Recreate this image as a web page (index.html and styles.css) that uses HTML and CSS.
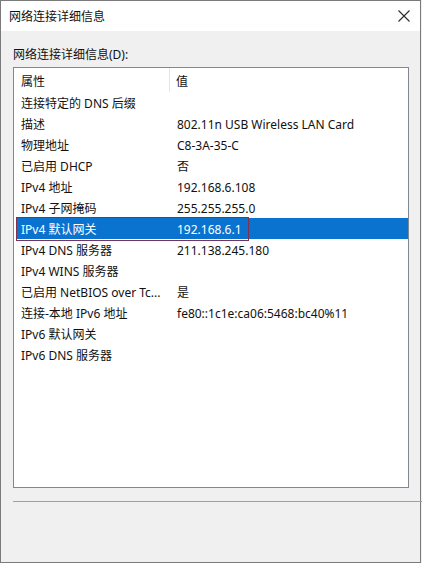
FILE: index.html
```html
<!DOCTYPE html>
<html lang="zh-CN">
<head>
<meta charset="utf-8">
<title>网络连接详细信息</title>
<link rel="stylesheet" href="styles.css">
</head>
<body>
<div class="window">
  <div class="titlebar">
    <span class="title">网络连接详细信息</span>
    <svg class="close" width="14" height="14" viewBox="0 0 14 14"><path d="M1.5 1.5 L12.5 12.5 M12.5 1.5 L1.5 12.5" stroke="#2b2b2b" stroke-width="1.1" fill="none"/></svg>
  </div>
  <div class="body">
    <div class="label">网络连接详细信息(D):</div>
    <div class="listbox">
      <div class="header">
        <div class="hcell c1">属性</div>
        <div class="hcell c2">值</div>
      </div>
      <div class="rows">
        <div class="row"><span class="c1">连接特定的 DNS 后缀</span><span class="c2"></span></div>
        <div class="row"><span class="c1">描述</span><span class="c2">802.11n USB Wireless LAN Card</span></div>
        <div class="row"><span class="c1">物理地址</span><span class="c2">C8-3A-35-C</span></div>
        <div class="row"><span class="c1">已启用 DHCP</span><span class="c2">否</span></div>
        <div class="row"><span class="c1">IPv4 地址</span><span class="c2">192.168.6.108</span></div>
        <div class="row"><span class="c1">IPv4 子网掩码</span><span class="c2">255.255.255.0</span></div>
        <div class="row selected"><span class="c1">IPv4 默认网关</span><span class="c2">192.168.6.1</span><span class="focus"></span></div>
        <div class="row"><span class="c1">IPv4 DNS 服务器</span><span class="c2">211.138.245.180</span></div>
        <div class="row"><span class="c1">IPv4 WINS 服务器</span><span class="c2"></span></div>
        <div class="row"><span class="c1">已启用 NetBIOS over Tc...</span><span class="c2">是</span></div>
        <div class="row"><span class="c1">连接-本地 IPv6 地址</span><span class="c2">fe80::1c1e:ca06:5468:bc40%11</span></div>
        <div class="row"><span class="c1">IPv6 默认网关</span><span class="c2"></span></div>
        <div class="row"><span class="c1">IPv6 DNS 服务器</span><span class="c2"></span></div>
      </div>
    </div>
    <div class="separator"></div>
  </div>
</div>
</body>
</html>
```
FILE: styles.css
```css
* { box-sizing: border-box; }
html, body { margin: 0; padding: 0; }
body {
  width: 422px;
  height: 563px;
  overflow: hidden;
  background: #f0f0f0;
  font-family: "Noto Sans", "Noto Sans CJK SC", sans-serif;
  font-size: 12px;
  color: #111;
}
.window {
  width: 421px;
  height: 563px;
  border: 1px solid #7a7a7a;
  display: flex;
  flex-direction: column;
  background: #f0f0f0;
}
.titlebar {
  height: 30px;
  background: #fff;
  display: flex;
  align-items: center;
  justify-content: space-between;
  padding: 0 9px 0 8px;
  flex: none;
}
.title { font-size: 12px; color: #111; }
.close { display: block; margin-top: -1px; }
.body {
  flex: 1;
  padding: 14px 0 0 12px;
  display: flex;
  flex-direction: column;
}
.label {
  height: 18px;
  padding-top: 2px;
  line-height: 16px;
  margin-bottom: 4px;
}
.listbox {
  width: 396px;
  height: 421px;
  border: 1px solid #828790;
  background: #fff;
  display: flex;
  flex-direction: column;
}
.header {
  height: 24px;
  display: flex;
  flex: none;
}
.hcell {
  padding-top: 3px;
  line-height: 21px;
  padding-left: 7px;
}
.hcell.c1 {
  width: 156px;
  border-right: 1px solid #e5e5e5;
}
.hcell.c2 { padding-left: 6px; }
.rows {
  display: flex;
  flex-direction: column;
  padding: 0 0 0 2px;
}
.row {
  position: relative;
  height: 21px;
  padding-top: 3px;
  line-height: 18px;
  display: flex;
  width: 392px;
}
.row .c1 {
  width: 161px;
  padding-left: 5px;
  white-space: nowrap;
  overflow: hidden;
}
.row .c2 { white-space: nowrap; }
.row.selected {
  background: #0a73cf;
  color: #fff;
}
.focus {
  position: absolute;
  left: 0;
  top: -1px;
  width: 233px;
  height: 24px;
  border: 1px solid #7d3250;
}
.separator {
  margin-top: 13px;
  height: 1px;
  margin-right: -2px;
  background: #a0a0a0;
}
```
